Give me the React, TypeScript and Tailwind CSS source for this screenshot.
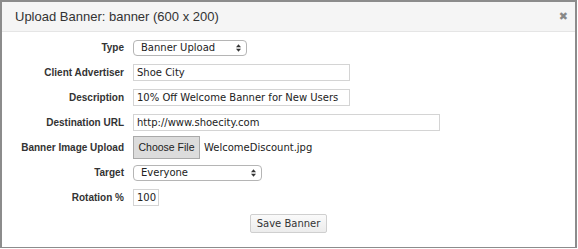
import React from "react";

const labelCls =
  "w-[122px] shrink-0 text-right font-bold text-[10px] text-[#333] [font-family:'Liberation_Sans',Arial,sans-serif]";
const fieldFont = "[font-family:'DejaVu_Sans',Verdana,sans-serif] text-[10px] text-[#222]";

function Arrows() {
  return (
    <svg width="5" height="8" viewBox="0 0 6 9" className="shrink-0">
      <path d="M3 0 L6 3.5 L0 3.5 Z" fill="#333" />
      <path d="M3 9 L6 5.5 L0 5.5 Z" fill="#333" />
    </svg>
  );
}

function Row({ label, children }: { label: string; children: React.ReactNode }) {
  return (
    <div className="flex h-[25px] items-center">
      <div className={labelCls}>{label}</div>
      <div className="ml-[9px] flex items-center">{children}</div>
    </div>
  );
}

function TextBox({ value, w }: { value: string; w: string }) {
  return (
    <div
      className={`${w} h-[17px] border border-[#d4d4d4] bg-white pl-[3px] flex items-center ${fieldFont} whitespace-nowrap overflow-hidden`}
    >
      {value}
    </div>
  );
}

function Select({ value, w }: { value: string; w: string }) {
  return (
    <div
      className={`${w} h-[16px] rounded-[4px] border border-[#b5b5b5] bg-white pl-[7px] pr-[5px] flex items-center justify-between ${fieldFont}`}
    >
      <span>{value}</span>
      <Arrows />
    </div>
  );
}

export default function App() {
  return (
    <div className="w-[578px] h-[249px] bg-white">
      <div className="w-[577px] h-[248px] border-2 border-b border-[#8c8c8c] bg-white flex flex-col">
        <div className="h-[30px] bg-[#f5f5f5] border-b border-[#e5e5e5] flex items-center justify-between pl-[13px] pr-[7px] shrink-0">
          <span className="text-[13px] text-[#333] [font-family:'Liberation_Sans',Arial,sans-serif]">
            Upload Banner: banner (600 x 200)
          </span>
          <span className="text-[11px] font-bold text-[#888] leading-none [font-family:'DejaVu_Sans',sans-serif]">✖</span>
        </div>
        <div className="pt-[3px]">
          <Row label="Type">
            <Select value="Banner Upload" w="w-[114px]" />
          </Row>
          <Row label="Client Advertiser">
            <TextBox value="Shoe City" w="w-[217px]" />
          </Row>
          <Row label="Description">
            <TextBox value="10% Off Welcome Banner for New Users" w="w-[217px]" />
          </Row>
          <Row label="Destination URL">
            <TextBox value="http://www.shoecity.com" w="w-[307px]" />
          </Row>
          <Row label="Banner Image Upload">
            <div className="h-[23px] w-[67px] bg-[#dcdcdc] border border-[#a9a9a9] flex items-center justify-center text-[10.5px] text-[#222] whitespace-nowrap [font-family:'Liberation_Sans',Arial,sans-serif]">
              Choose File
            </div>
            <span className={`ml-[4px] ${fieldFont}`}>WelcomeDiscount.jpg</span>
          </Row>
          <Row label="Target">
            <Select value="Everyone" w="w-[129px]" />
          </Row>
          <Row label="Rotation %">
            <TextBox value="100" w="w-[26px]" />
          </Row>
          <div className="flex justify-center pt-[4px]">
            <div className="h-[19px] w-[77px] rounded-[2px] border border-[#cfcfcf] bg-gradient-to-b from-[#fafafa] to-[#ececec] flex items-center justify-center whitespace-nowrap text-[10px] text-[#333] [font-family:'DejaVu_Sans',Verdana,sans-serif]">
              Save Banner
            </div>
          </div>
        </div>
      </div>
    </div>
  );
}
